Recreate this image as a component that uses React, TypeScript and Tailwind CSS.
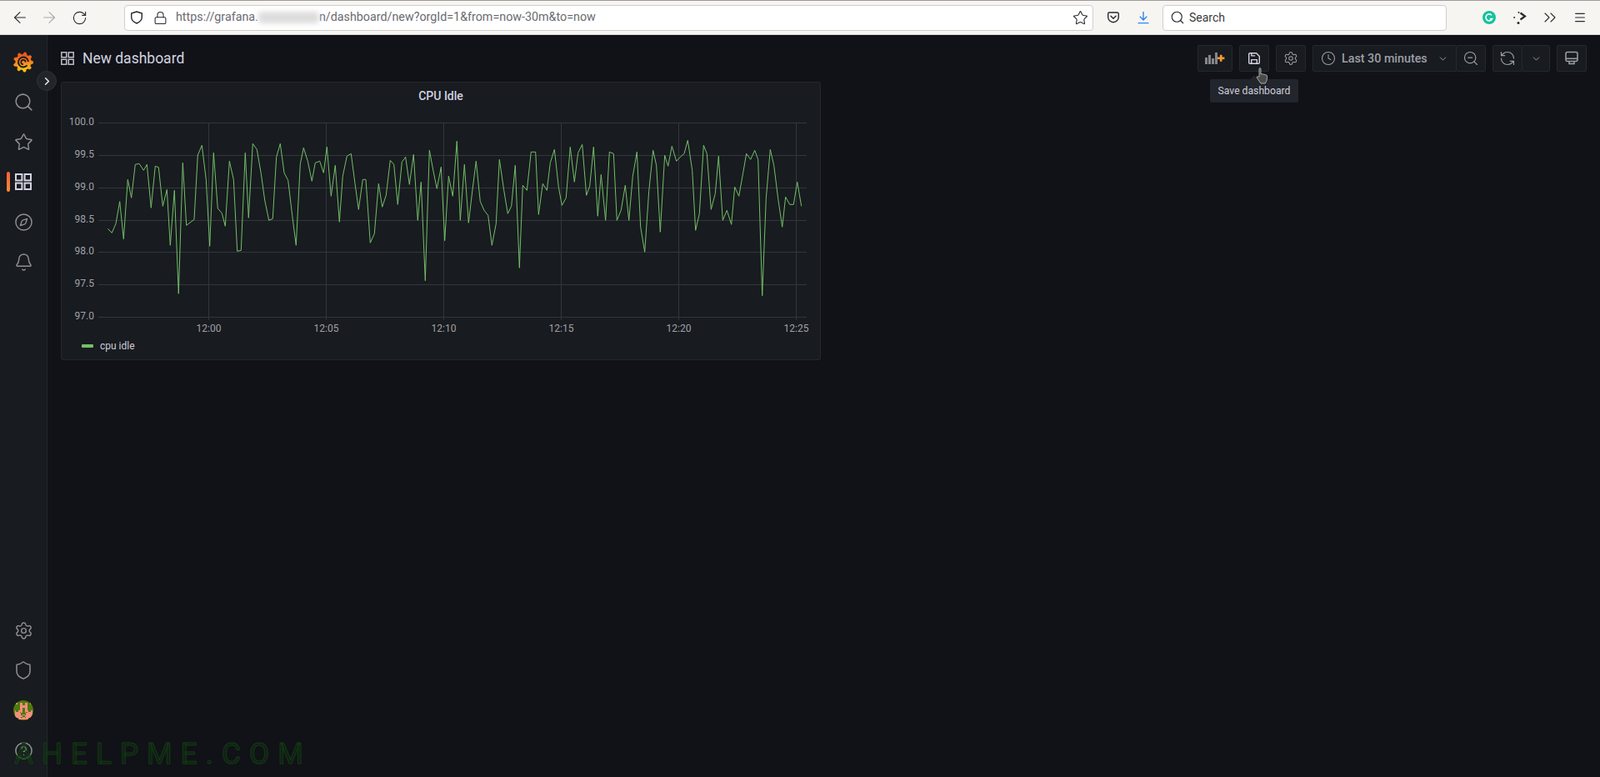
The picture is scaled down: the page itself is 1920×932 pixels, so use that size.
import React from "react";
import {
  ArrowLeft, ArrowRight, RotateCw, Shield, Lock, Star, Search, ChevronsRight, Menu,
  Compass, Bell, Settings, CircleHelp, ChevronRight, ChevronDown, Clock, ZoomOut, RefreshCcw,
} from "lucide-react";

const partA: [number, number][] = [
  [388,553],[403,568],[417,535],[431,455],[445,590],[460,376],[473,442],[487,322],[501,319],[517,343],[529,322],[544,478],[559,328],[571,332],[586,472],[601,412],[613,613],[628,415],[643,787],[658,316],[671,541],[699,520],[712,288],[727,253],[742,376],[755,616],[769,280],[784,480],[799,497],[811,544],[826,310],[841,376],[854,634],[868,631],[883,280],[895,514],[910,247],[925,268],[940,355],[953,450],[968,523],[982,517],[995,295],[1009,247],[1023,352],[1037,379],[1052,505],[1066,613],[1081,320],[1093,262],[1108,310],[1123,382],[1135,316],[1151,310],[1165,352],[1177,259],[1192,436],[1207,325],[1222,529],[1234,364],[1249,292],[1264,283],[1278,391],[1291,484],[1306,376],[1317,376],[1333,604],[1348,571],[1363,391],[1376,475],[1390,433],[1405,307],[1418,322],[1432,466],[1447,313],[1460,295],[1474,394],[1489,286],
];
const partB: [number, number][] = [
  [4,523],[16,385],[31,740],[46,271],[60,346],[73,409],[88,331],[101,596],[115,364],[130,436],[145,238],[157,523],[172,322],[187,532],[200,420],[214,310],[229,455],[243,487],[257,505],[271,613],[286,535],[298,304],[314,415],[328,499],[341,472],[355,325],[370,694],[382,397],[397,415],[412,277],[428,277],[439,502],[454,391],[469,415],[481,316],[496,268],[511,403],[523,469],[538,442],[553,259],[568,385],[581,280],[596,250],[611,433],[623,400],[637,259],[652,508],[664,358],[680,523],[694,277],[709,283],[721,523],[736,487],[751,397],[764,523],[778,364],[793,277],[806,547],[821,637],[836,418],[851,271],[863,325],[877,565],[893,289],[905,328],[919,256],[935,310],[949,295],[963,283],[976,235],[992,343],[1004,559],[1018,499],[1033,253],[1045,283],[1060,484],[1075,427],[1087,292],[1102,523],[1117,487],[1133,538],[1145,403],[1160,436],[1175,352],[1187,283],[1202,304],[1217,271],[1229,304],[1244,794],[1258,445],[1273,268],[1286,325],[1301,445],[1316,547],[1328,439],[1343,466],[1357,466],[1370,385],[1385,472],
];
const linePoints = [
  ...partA.map(([x, y]) => `${(x / 3).toFixed(1)},${(90 + y / 3).toFixed(1)}`),
  ...partB.map(([x, y]) => `${(500 + x / 3).toFixed(1)},${(90 + y / 3).toFixed(1)}`),
].join(" ");

const yTicks: [string, number][] = [
  ["100.0", 147], ["99.5", 186], ["99.0", 225], ["98.5", 264], ["98.0", 302], ["97.5", 341], ["97.0", 380],
];
const xTicks: [string, number][] = [
  ["12:00", 250], ["12:05", 391], ["12:10", 532], ["12:15", 673], ["12:20", 814], ["12:25", 955],
];

const avatarRows = [
  "................",
  "................",
  "..#..##..##..#..",
  ".....##..##.....",
  ".....######.....",
  ".....######.....",
  ".....##..##.....",
  ".....##..##.....",
  ".#..###..###..#.",
  ".####.#..#.####.",
  ".#####....#####.",
  ".#####.##.#####.",
  ".######..######.",
  "..####.##.####..",
  "....########....",
  "................",
];

const logoPoints = (() => {
  const out: string[] = [];
  const teeth = 9;
  for (let i = 0; i < teeth * 4; i++) {
    const a = (i / (teeth * 4)) * Math.PI * 2 - Math.PI / 2 + 0.12;
    const phase = i % 4;
    const r = phase === 0 || phase === 1 ? 11.8 : 9.2;
    out.push(`${(12 + r * Math.cos(a)).toFixed(2)},${(12.5 + r * Math.sin(a)).toFixed(2)}`);
  }
  return out.join(" ");
})();

function GrafanaLogo() {
  return (
    <svg width="24" height="25" viewBox="0 0 24 25">
      <defs>
        <linearGradient id="gflogo" x1="0" y1="0" x2="0" y2="1">
          <stop offset="0" stopColor="#f0511f" />
          <stop offset="0.55" stopColor="#f78a1d" />
          <stop offset="1" stopColor="#fbc916" />
        </linearGradient>
      </defs>
      <polygon points={logoPoints} fill="url(#gflogo)" stroke="url(#gflogo)" strokeWidth="0.6" strokeLinejoin="round" />
      <circle cx="12" cy="12.5" r="9" fill="url(#gflogo)" />
      <path d="M16.6 16.4A6 6 0 1 1 18 12" fill="none" stroke="#181b1f" strokeWidth="1.9" />
      <path d="M12 15.2a2.7 2.7 0 1 1 2.7-2.700" fill="none" stroke="#181b1f" strokeWidth="1.7" />
    </svg>
  );
}

function AppsIcon({ size, stroke, color }: { size: number; stroke: number; color: string }) {
  return (
    <svg width={size} height={size} viewBox="0 0 20 20" fill="none" stroke={color} strokeWidth={stroke}>
      <rect x="1" y="1" width="7.4" height="7.4" />
      <rect x="11.6" y="1" width="7.4" height="7.4" />
      <rect x="1" y="11.6" width="7.4" height="7.4" />
      <rect x="11.6" y="11.6" width="7.4" height="7.4" />
    </svg>
  );
}

function SideItem({ children, active }: { children: React.ReactNode; active?: boolean }) {
  return (
    <div className="relative flex h-[48px] w-full items-center justify-center">
      {active && (
        <div className="absolute left-[8px] top-[12px] h-[24px] w-[4px] rounded-[2px] bg-gradient-to-b from-[#f55f3e] to-[#ff8833]" />
      )}
      {children}
    </div>
  );
}

const btn = "flex h-[32px] items-center justify-center border border-[#26282d] bg-[#181b1f] rounded-[2px]";
const grey = "#9d9ea8";

export default function App() {
  return (
    <div className="relative flex h-[932px] w-[1920px] flex-col overflow-hidden bg-[#111217] font-[family-name:Roboto,sans-serif]">
      {/* browser chrome */}
      <div className="flex h-[42px] shrink-0 items-center border-t border-b border-t-[#9c9b97] border-b-[#d9d8d4] bg-[#f6f5f2] pl-[13px] font-[family-name:'Noto_Sans',sans-serif] text-[#2a2a2e]">
        <ArrowLeft size={22} strokeWidth={1.2} />
        <ArrowRight size={22} strokeWidth={1.2} className="ml-[13px] text-[#a9a9ab]" />
        <RotateCw size={19} strokeWidth={1.4} className="ml-[16px]" />
        <div className="ml-[44px] flex h-[31px] w-[1163px] items-center rounded-[4px] border border-[#cfcec9] bg-white pl-[6px] pr-[5px]">
          <svg width="16" height="16" viewBox="0 0 16 16" fill="none" stroke="#2a2a2e" strokeWidth="1.4" strokeLinejoin="round">
            <path d="M8 1 1.700 3v4.500c0 3.500 2.600 6 6.300 7.500 3.700-1.500 6.300-4 6.300-7.500V3z" />
          </svg>
          <Lock size={17} strokeWidth={1.5} className="ml-[12px]" />
          <div className="ml-[10px] flex flex-1 items-center whitespace-nowrap text-[14.3px] text-[#6b6b70]">
            <span>https://grafana.</span>
            <span className="h-[14px] w-[73px] rounded-sm bg-[#dcdcdc] blur-[3px]" />
            <span>n/dashboard/new?orgId=1&amp;from=now-30m&amp;to=now</span>
          </div>
          <Star size={19} strokeWidth={1.4} />
        </div>
        <svg className="ml-[16px]" width="16" height="16" viewBox="0 0 16 16" fill="none" stroke="#2a2a2e" strokeWidth="1.4">
          <path d="M1.700 3.500A1.500 1.500 0 0 1 3.200 2h9.600a1.500 1.500 0 0 1 1.500 1.500V7.400a6.300 6.300 0 0 1-12.600 0z" />
          <path d="M5 6.300l3 2.900 3-2.900" strokeLinecap="round" strokeLinejoin="round" />
        </svg>
        <svg className="ml-[20px]" width="16" height="16" viewBox="0 0 16 16" fill="none" stroke="#2f86ee" strokeWidth="1.4">
          <path d="M8 1v10M3.800 6.800 8 11l4.200-4.200M1.500 14.600h13" />
        </svg>
        <div className="ml-[15px] flex h-[31px] w-[341px] items-center rounded-[4px] border border-[#cfcec9] bg-white pl-[8px] text-[14px] text-[#3a3a3e]">
          <Search size={18} strokeWidth={1.5} className="text-[#2a2a2e]" />
          <span className="ml-[5px]">Search</span>
        </div>
        <svg className="ml-[43px]" width="16" height="16" viewBox="0 0 16 16" fill="none">
          <circle cx="8" cy="8" r="8" fill="#15c39a" />
          <path d="M11 5.300A4 4 0 1 0 11.600 9.600H8.800" stroke="#fff" strokeWidth="1.6" />
        </svg>
        <svg className="ml-[21px]" width="16" height="16" viewBox="0 0 16 16" fill="#2a2a2e">
          <circle cx="6.500" cy="2" r="1" />
          <circle cx="1.200" cy="8" r="1" />
          <circle cx="6" cy="14.500" r="1.500" />
          <path d="M8.500 2.500 14 6.500 8.500 10.500" fill="none" stroke="#2a2a2e" strokeWidth="2.200" />
        </svg>
        <ChevronsRight size={24} strokeWidth={1.1} className="ml-[16px]" />
        <Menu size={16} strokeWidth={1.8} className="ml-[16px]" />
      </div>

      <div className="flex min-h-0 flex-1">
        {/* sidebar */}
        <div className="flex w-[57px] shrink-0 flex-col justify-between border-r border-[#26282d] bg-[#181b1f] py-[8px] text-[#8e8f96]">
          <div className="flex flex-col">
            <SideItem><GrafanaLogo /></SideItem>
            <SideItem><Search size={25} strokeWidth={1.45} /></SideItem>
            <SideItem><Star size={23} strokeWidth={1.5} /></SideItem>
            <SideItem active><AppsIcon size={20} stroke={2} color="#d3d3e2" /></SideItem>
            <SideItem><Compass size={23} strokeWidth={1.5} /></SideItem>
            <SideItem><Bell size={23} strokeWidth={1.5} /></SideItem>
          </div>
          <div className="flex flex-col">
            <SideItem><Settings size={23} strokeWidth={1.5} /></SideItem>
            <SideItem><Shield size={24} strokeWidth={1.5} /></SideItem>
            <SideItem>
              <div className="h-[24px] w-[24px] overflow-hidden rounded-full bg-[#4c7a0b]">
                <svg width="24" height="24" viewBox="0 0 16 16" shapeRendering="crispEdges">
                  {avatarRows.flatMap((row, y) =>
                    row.split("").map((c, x) =>
                      c === "#" ? <rect key={`${x}-${y}`} x={x} y={y} width="1" height="1" fill="#f58d7c" /> : null,
                    ),
                  )}
                </svg>
              </div>
            </SideItem>
            <SideItem><CircleHelp size={23} strokeWidth={1.6} /></SideItem>
          </div>
        </div>

        {/* main */}
        <div className="flex min-w-0 flex-1 flex-col px-[16px]">
          <div className="flex h-[56px] shrink-0 items-center justify-between">
            <div className="flex items-center">
              <AppsIcon size={16} stroke={1.8} color="#c3c4d0" />
              <span className="ml-[10px] text-[17.5px] text-[#d2d3e0]">New dashboard</span>
            </div>
            <div className="flex items-center gap-[8px]">
              <div className={`${btn} w-[42px]`}>
                <svg width="24" height="16" viewBox="0 0 24 16">
                  <g fill="#85868c">
                    <rect x="0" y="7" width="3" height="8" />
                    <rect x="4" y="4" width="3" height="11" />
                    <rect x="8" y="8" width="3" height="7" />
                    <rect x="12" y="1" width="3" height="14" />
                  </g>
                  <rect x="15" y="6.500" width="8.400" height="2.600" fill="#ff9a2e" />
                  <rect x="17.900" y="3.800" width="2.600" height="8" fill="#ff9a2e" />
                </svg>
              </div>
              <div className={`${btn} relative w-[36px] border-[#2c2e34] bg-[#1f2227]`}>
                <svg width="16" height="16" viewBox="0 0 16 16" fill="none" stroke="#d3d3e2" strokeWidth="1.4" strokeLinejoin="round">
                  <path d="M3 1.700h7.600l3.700 3.700V13a1.300 1.300 0 0 1-1.300 1.300H3A1.300 1.300 0 0 1 1.700 13V3A1.300 1.300 0 0 1 3 1.700z" />
                  <path d="M4.700 14.300V9.600h6.600v4.700" />
                  <path d="M4.800 1.700v3.200h4.400" />
                </svg>
                <div className="absolute left-1/2 top-[40px] z-10 flex h-[28px] w-[106px] -translate-x-1/2 items-center justify-center rounded-[2px] bg-[#22252b] text-[12.2px] text-[#ccccdc]">
                  <div className="absolute left-1/2 top-[-3px] h-[7px] w-[7px] -translate-x-1/2 rotate-45 bg-[#22252b]" />
                  <span className="relative">Save dashboard</span>
                </div>
                <svg className="absolute left-[19px] top-[26px] z-20" width="16" height="20" viewBox="0 0 16 20">
                  <path
                    d="M4 1.500c0-1.200 2-1.200 2 0V8l1-.3c.6-.2 1.200 0 1.400.4.6-.3 1.300-.2 1.600.3.7-.3 1.400-.1 1.700.4.8-.2 1.600.3 1.700 1.200.2 2 .2 4.500-.8 6.500-.6 1.200-1 2-1.300 2.500H6c-1-1.300-3-3.800-4.800-7-.4-.8.5-1.700 1.300-1.100L4 11z"
                    fill="#4a4a4a"
                    stroke="#dcdcdc"
                    strokeWidth="0.7"
                  />
                </svg>
              </div>
              <div className={`${btn} w-[36px]`}>
                <Settings size={18} strokeWidth={1.4} color={grey} />
              </div>
              <div className="flex">
                <div className={`${btn} w-[173px] justify-start pl-[9px]`}>
                  <Clock size={18} strokeWidth={1.4} color={grey} />
                  <span className="ml-[7px] pt-px text-[14.3px] font-medium text-[#9d9ea8]">Last 30 minutes</span>
                  <ChevronDown size={13} strokeWidth={1.8} color={grey} className="ml-[12px]" />
                </div>
                <div className={`${btn} -ml-px w-[36px]`}>
                  <ZoomOut size={20} strokeWidth={1.4} color={grey} />
                </div>
              </div>
              <div className="flex">
                <div className={`${btn} w-[36px]`}>
                  <RefreshCcw size={20} strokeWidth={1.4} color={grey} />
                </div>
                <div className={`${btn} -ml-px w-[34px]`}>
                  <ChevronDown size={13} strokeWidth={1.8} color={grey} />
                </div>
              </div>
              <div className={`${btn} w-[36px]`}>
                <svg width="18" height="18" viewBox="0 0 18 18" fill="none" stroke={grey} strokeWidth="1.5">
                  <rect x="2" y="1.500" width="14" height="11" rx="2" />
                  <path d="M2 9.300h14" />
                  <path d="M6 12.500v3h6v-3" />
                </svg>
              </div>
            </div>
          </div>

          {/* panel */}
          <div className="h-[334px] w-[912px] rounded-[3px] border border-[#26282d] bg-[#181b1f]">
            <div className="flex h-[31px] items-center justify-center pt-[2px] text-[14px] font-medium text-[#d2d3e0]">CPU Idle</div>
            <svg className="block font-[family-name:Roboto,sans-serif]" width="910" height="270" viewBox="74 130 910 270">
              <g stroke="#33363b" strokeWidth="1" shapeRendering="crispEdges">
                {yTicks.map(([l, y]) => (
                  <line key={l} x1="118" x2="968" y1={y + 0.5} y2={y + 0.5} />
                ))}
                {xTicks.map(([l, x]) => (
                  <line key={l} x1={x + 0.5} x2={x + 0.5} y1="147" y2="384" />
                ))}
              </g>
              <g fill="#a0a1a9" fontSize="12">
                {yTicks.map(([l, y]) => (
                  <text key={l} x="113" y={y + 3} textAnchor="end">{l}</text>
                ))}
                {xTicks.map(([l, x]) => (
                  <text key={l} x={x + 0.5} y="398" textAnchor="middle">{l}</text>
                ))}
              </g>
              <polyline points={linePoints} fill="none" stroke="#73bf69" strokeWidth="1" strokeLinejoin="round" />
            </svg>
            <div className="flex h-[30px] items-center pl-[24px]">
              <div className="h-[4px] w-[14px] rounded-[1px] bg-[#73bf69]" />
              <span className="ml-[8px] text-[12px] text-[#ccccdc]">cpu idle</span>
            </div>
          </div>
        </div>
      </div>

      {/* sidebar collapse toggle */}
      <div className="absolute left-[44px] top-[85px] flex h-[24px] w-[24px] items-center justify-center rounded-full border border-[#2f3238] bg-[#22252b] text-[#e4e4ee]">
        <ChevronRight size={15} strokeWidth={2.6} />
      </div>

      {/* watermark */}
      <div className="pointer-events-none absolute left-[17px] top-[887px] whitespace-nowrap font-[family-name:'Liberation_Sans',sans-serif] text-[35px] leading-none tracking-[10.1px] text-transparent [-webkit-text-stroke:1px_#123a14] [text-shadow:0_0_3px_rgba(20,70,20,0.35)]">
        AHELPME.COM
      </div>
    </div>
  );
}
